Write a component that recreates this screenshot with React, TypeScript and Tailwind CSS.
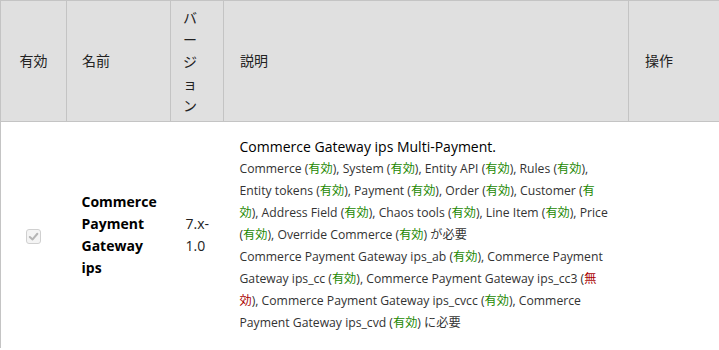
const font = { fontFamily: '"Open Sans", "Noto Sans CJK JP", sans-serif' };

function On() {
  return <span className="text-[#228800]">有効</span>;
}

function Off() {
  return <span className="text-[#aa0000]">無効</span>;
}

export default function App() {
  return (
    <div className="w-[719px] h-[350px] overflow-hidden bg-white text-[#222]" style={font}>
      <table className="w-[760px] border-collapse border-l border-t border-[#c4c4c4] table-fixed">
        <colgroup>
          <col className="w-[66px]" />
          <col className="w-[104px]" />
          <col className="w-[53px]" />
          <col className="w-[405px]" />
          <col className="w-[132px]" />
        </colgroup>
        <thead>
          <tr className="bg-[#e0e0e0] text-[14px] leading-[22px] font-normal">
            <th className="border-r border-b border-[#c4c4c4] text-center font-normal">有効</th>
            <th className="border-r border-b border-[#c4c4c4] text-left font-normal pl-[15px]">名前</th>
            <th className="border-r border-b border-[#c4c4c4] text-left font-normal pl-[12px] pr-[20px] pt-[6px] pb-[4px]">
              バージョン
            </th>
            <th className="border-r border-b border-[#c4c4c4] text-left font-normal pl-[16px]">説明</th>
            <th className="border-b border-[#c4c4c4] text-left font-normal pl-[16px]">操作</th>
          </tr>
        </thead>
        <tbody>
          <tr className="align-middle">
            <td className="text-center">
              <span className="inline-flex w-[15px] h-[15px] items-center justify-center rounded-[3px] border border-[#d0d0d0] bg-[#f4f4f4] align-middle">
                <svg width="11" height="11" viewBox="0 0 12 12">
                  <path d="M2 6.5 L5 9.2 L10.2 3" fill="none" stroke="#b5b5b5" strokeWidth="2.2" strokeLinecap="round" strokeLinejoin="round" />
                </svg>
              </span>
            </td>
            <td className="pl-[15px] pr-[10px] text-[14px] leading-[22px] font-bold text-black">
              Commerce Payment Gateway ips
            </td>
            <td className="pl-[15px] pr-[6px] text-[14px] leading-[22px]">7.x-1.0</td>
            <td className="pl-[16px] pr-[16px] pt-[14px] pb-[14px]">
              <div className="text-[14px] leading-[22px] text-black">Commerce Gateway ips Multi-Payment.</div>
              <div className="text-[12.2px] leading-[22px] text-[#333]">
                Commerce (<On />), System (<On />), Entity API (<On />), Rules (<On />), Entity tokens (<On />),
                Payment (<On />), Order (<On />), Customer (<On />), Address Field (<On />), Chaos tools (<On />),
                Line Item (<On />), Price (<On />), Override Commerce (<On />) が必要
              </div>
              <div className="text-[12.2px] leading-[22px] text-[#333]">
                Commerce Payment Gateway ips_ab (<On />), Commerce Payment Gateway ips_cc (<On />), Commerce Payment
                Gateway ips_cc3 (<Off />), Commerce Payment Gateway ips_cvcc (<On />), Commerce Payment Gateway
                ips_cvd (<On />) に必要
              </div>
            </td>
            <td></td>
          </tr>
        </tbody>
      </table>
    </div>
  );
}
